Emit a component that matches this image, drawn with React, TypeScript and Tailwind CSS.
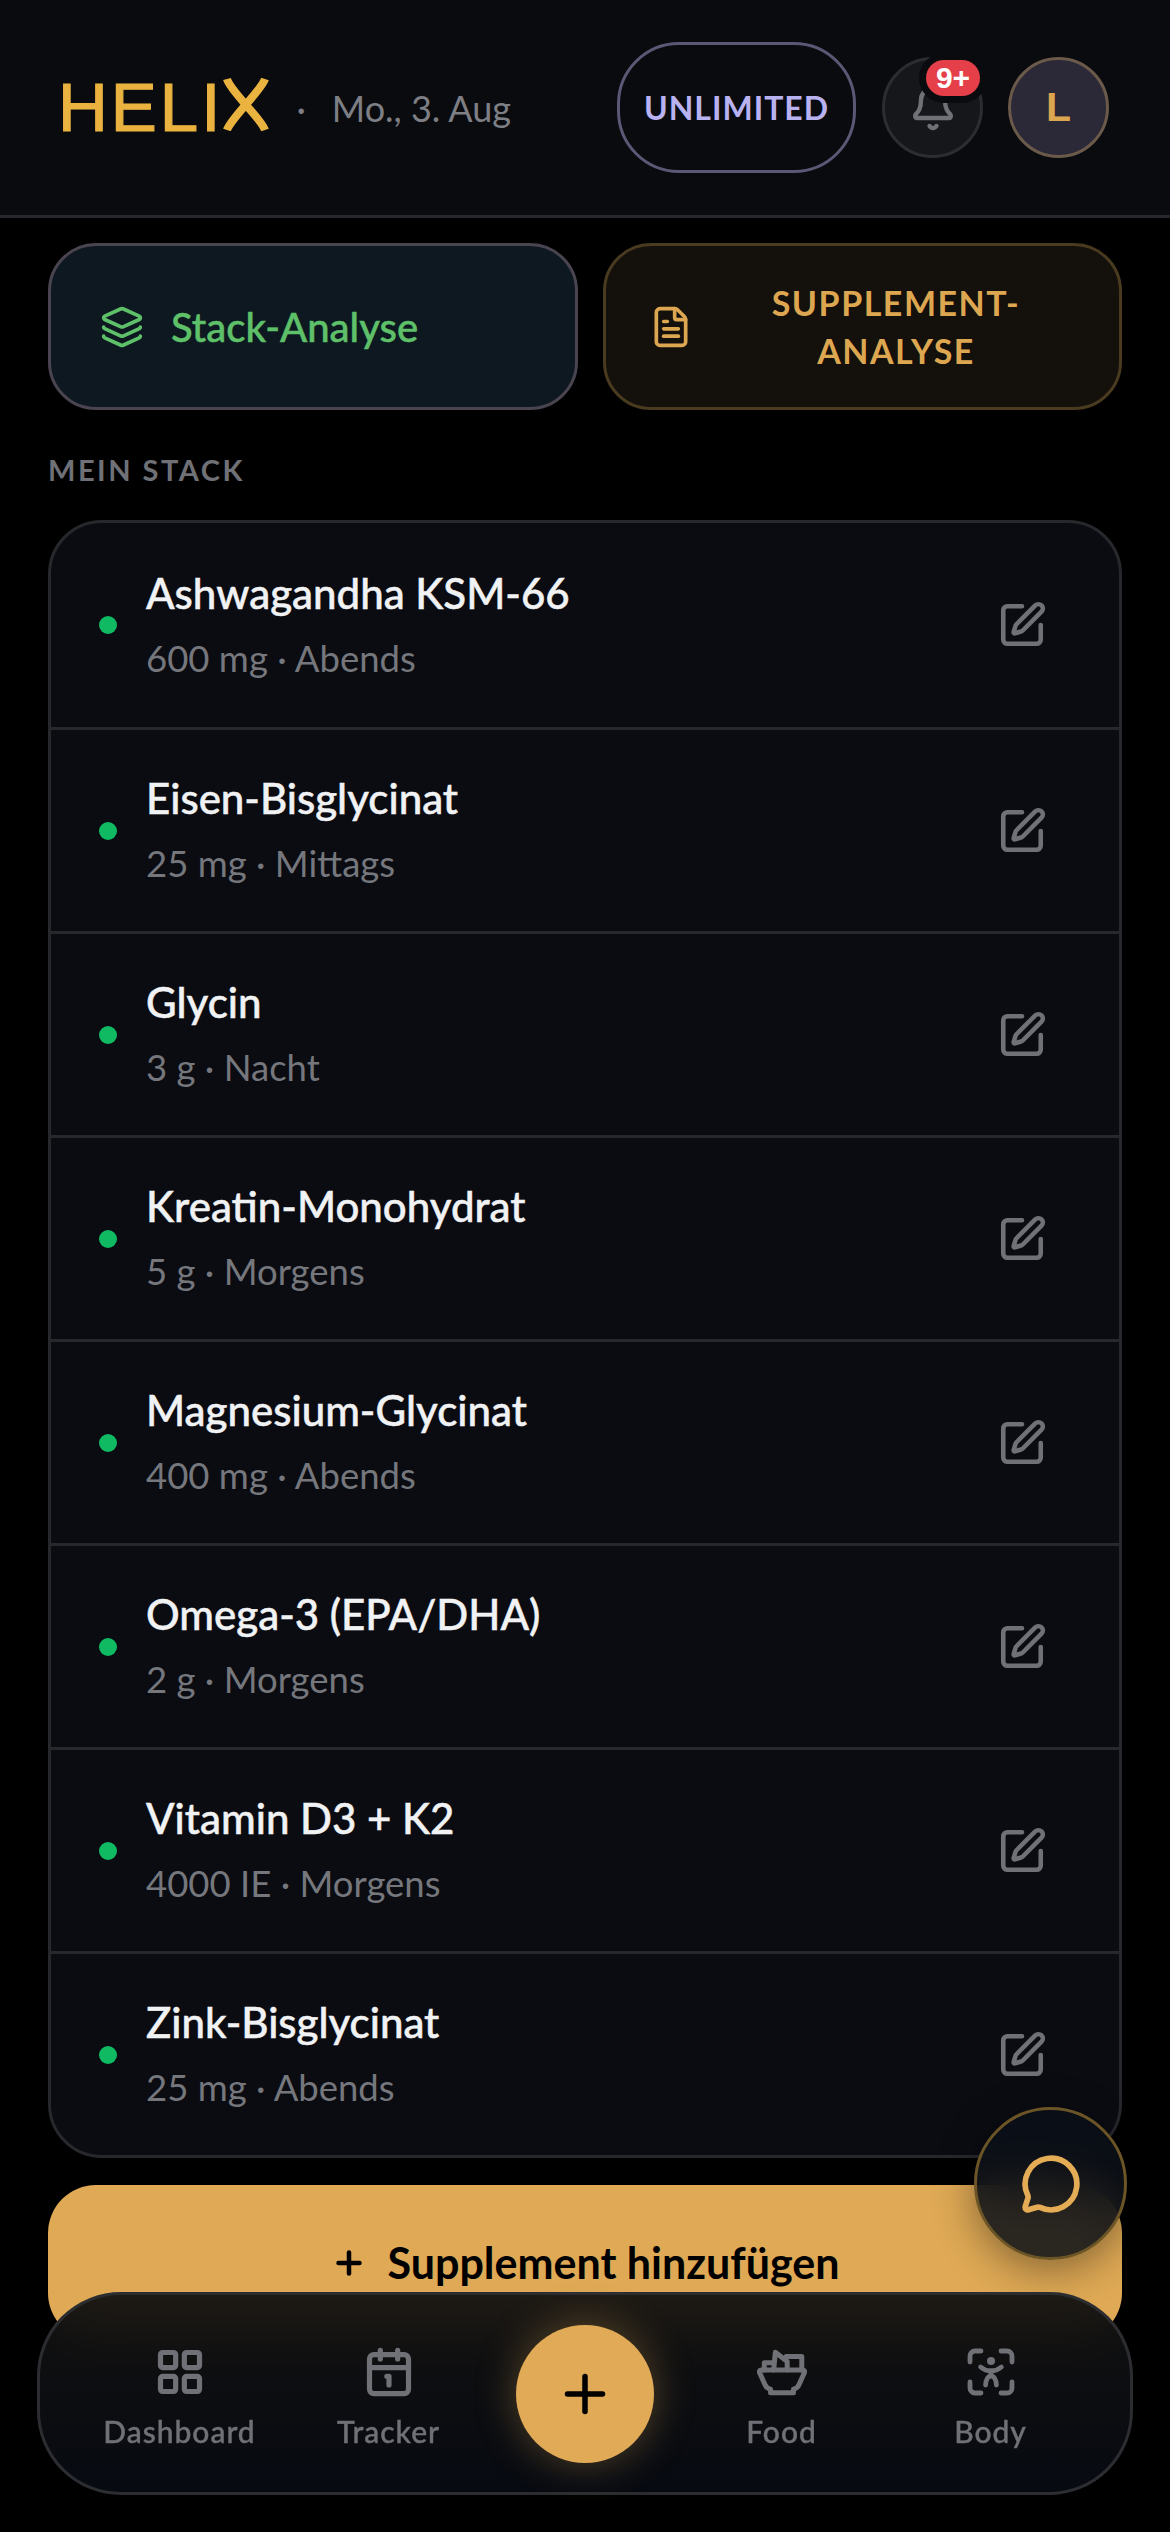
import { Bell, Calendar1, FileText, Layers, LayoutGrid, MessageCircle, Plus, SquarePen } from "lucide-react";

const supplements = [
  { name: "Ashwagandha KSM-66", detail: "600 mg · Abends" },
  { name: "Eisen-Bisglycinat", detail: "25 mg · Mittags" },
  { name: "Glycin", detail: "3 g · Nacht" },
  { name: "Kreatin-Monohydrat", detail: "5 g · Morgens" },
  { name: "Magnesium-Glycinat", detail: "400 mg · Abends" },
  { name: "Omega-3 (EPA/DHA)", detail: "2 g · Morgens" },
  { name: "Vitamin D3 + K2", detail: "4000 IE · Morgens" },
  { name: "Zink-Bisglycinat", detail: "25 mg · Abends" },
];

const BowlIcon = () => (
  <svg width="50" height="50" viewBox="0 0 24 24" fill="none" stroke="currentColor" strokeWidth="2.4" strokeLinecap="round" strokeLinejoin="round">
    <path d="M2 11h20c.6 0 1 .5.8 1.200L20.200 18c-.5 1.200-1.500 2-2.700 2.300V22h-11v-1.700C5.300 20 4.300 19.200 3.800 18L1.200 12.200C1 11.500 1.400 11 2 11z" />
    <path d="M8 11l.8-8.500L14.500 7v4" />
    <path d="M14 4.500h7.500V11" />
    <path d="M3.500 11V7.500H8" />
  </svg>
);

const BodyIcon = () => (
  <svg width="48" height="48" viewBox="0 0 24 24" fill="none" stroke="currentColor" strokeWidth="2.400" strokeLinecap="round" strokeLinejoin="round">
    <path d="M1.500 7V4a2.500 2.500 0 0 1 2.500-2.500h3" />
    <path d="M17 1.500h3A2.500 2.500 0 0 1 22.500 4v3" />
    <path d="M22.500 17v3a2.500 2.500 0 0 1-2.500 2.500h-3" />
    <path d="M7 22.500H4A2.500 2.500 0 0 1 1.500 20v-3" />
    <circle cx="12" cy="6.500" r="2" fill="currentColor" stroke="none" />
    <path d="M6.800 9.500c1.800 1.500 3.200 2 5.200 2s3.400-.5 5.200-2" />
    <path d="M12 11.500v2.500M9.300 18.500c0-2.500 1.200-4.500 2.700-4.500s2.700 2 2.700 4.500" />
  </svg>
);

const NavItem = ({ label, icon }: { label: string; icon: React.ReactNode }) => (
  <div className="w-[209px] pt-[8px] flex flex-col items-center text-[#6f7177]">
    <div className="h-[50px] flex items-center justify-center">{icon}</div>
    <span className="mt-[16px] text-[30px] leading-[36px] font-medium tracking-[1px] [-webkit-text-stroke:0.4px_#6f7177]">{label}</span>
  </div>
);

export default function App() {
  return (
    <div className="relative h-[2532px] w-[1170px] overflow-hidden bg-black font-['Lato',sans-serif]">
      <header className="h-[218px] bg-[#0a0b0f] border-b-[3px] border-[#26282c] flex items-center justify-between pl-[58px] pr-[61px]">
        <div className="flex items-center">
          <span className="text-[69px] leading-none tracking-[3px] text-[#eab23f] [-webkit-text-stroke:1.2px_#eab23f] font-['Liberation_Sans',sans-serif]">
            HELI
            <span className="relative text-transparent [-webkit-text-stroke:0]">
              X
              <svg className="absolute left-0 top-[9px]" width="46" height="53" viewBox="0 0 46 53" fill="none" stroke="#eab23f" strokeWidth="8">
                <path d="M4 1c3 12 34 39 38 51" />
                <path d="M42 1C38 13 8 40 4 52" />
              </svg>
            </span>
          </span>
          <span className="ml-[24px] text-[36px] text-[#7d7f85]">·</span>
          <span className="ml-[26px] text-[36px] leading-none text-[#7d7f85]">Mo., 3. Aug</span>
        </div>
        <div className="flex items-center">
          <div className="w-[239px] h-[131px] rounded-[62px] border-[3px] border-[#5a5875] flex items-center justify-center text-[32px] font-bold tracking-[1px] text-[#b9b2f0]">
            UNLIMITED
          </div>
          <div className="relative ml-[26px] w-[101px] h-[101px] rounded-full bg-[#15171b] border-[3px] border-[#2b2d31] flex items-center justify-center text-[#6f7177]">
            <Bell size={48} strokeWidth={2.2} />
            <span className="absolute left-[41px] top-0 h-[36px] w-[54px] rounded-full bg-[#e5404a] text-white text-[30px] font-bold font-['Liberation_Sans',sans-serif] leading-[36px] text-center shadow-[0_0_0_7px_#0a0b0f]">
              9+
            </span>
          </div>
          <div className="ml-[25px] w-[101px] h-[101px] rounded-full bg-[#2b2838] border-[3px] border-[#6b5a4a] flex items-center justify-center text-[41px] font-bold text-[#dca54f] font-['Liberation_Sans',sans-serif]">
            L
          </div>
        </div>
      </header>

      <main className="px-[48px]">
        <div className="mt-[25px] flex gap-[25px]">
          <button className="w-[530px] h-[167px] rounded-[48px] bg-[#0d1820] border-[3px] border-[#4a4450] flex items-center pl-[49px] text-[#5fc06a]">
            <Layers size={44} strokeWidth={2} />
            <span className="ml-[27px] text-[40px] font-medium [-webkit-text-stroke:0.5px_#5fc06a]">Stack-Analyse</span>
          </button>
          <button className="w-[519px] h-[167px] rounded-[48px] bg-[#14100b] border-[3px] border-[#4a3a20] flex items-center pl-[43px] text-[#dda650]">
            <FileText size={44} strokeWidth={2} />
            <span className="flex-1 pr-[20px] text-center text-[34px] leading-[48px] font-bold tracking-[1.5px]">
              SUPPLEMENT-
              <br />
              ANALYSE
            </span>
          </button>
        </div>

        <h2 className="mt-[42px] text-[29px] leading-[36px] font-bold tracking-[2.5px] text-[#6f7177]">MEIN STACK</h2>

        <div className="mt-[32px] rounded-[54px] border-[3px] border-[#26282c] bg-[#0a0c12] overflow-hidden">
          {supplements.map((s, i) => (
            <div key={s.name} className={`h-[204px] flex items-center pl-[48px] pr-[72px] ${i > 0 ? "border-t-[3px] border-[#26282c]" : ""}`}>
              <span className="w-[18px] h-[18px] rounded-full bg-[#0fba63]" />
              <div className="ml-[29px] flex-1">
                <div className="text-[42px] leading-[52px] font-medium text-[#f1f2f4] [-webkit-text-stroke:0.5px_#f1f2f4]">{s.name}</div>
                <div className="mt-[13px] text-[36.500px] leading-[52px] text-[#75777d]">{s.detail}</div>
              </div>
              <SquarePen size={50} strokeWidth={2.2} className="text-[#6f7177]" />
            </div>
          ))}
        </div>

        <button className="mt-[27px] w-full h-[156px] rounded-[48px] bg-[#dfa955] flex items-center justify-center text-black">
          <Plus size={36} strokeWidth={3} />
          <span className="ml-[21px] text-[43px] font-bold">Supplement hinzufügen</span>
        </button>
      </main>

      <button className="absolute left-[974px] top-[2107px] w-[153px] h-[153px] rounded-full bg-[#0a0f18]/85 backdrop-blur-xl border-[3px] border-[#6b5426] flex items-center justify-center text-[#e3ac55] shadow-[0_10px_40px_rgba(0,0,0,0.4)]">
        <MessageCircle size={62} strokeWidth={2.2} />
      </button>

      <nav className="absolute left-[37px] top-[2292px] w-[1096px] h-[203px] rounded-[84px] bg-gradient-to-b from-[#131211]/95 to-[#070a11] backdrop-blur-xl border-[3px] border-[#2b2d31] flex items-center justify-center">
        <NavItem label="Dashboard" icon={<LayoutGrid size={52} strokeWidth={2.400} />} />
        <NavItem label="Tracker" icon={<Calendar1 size={52} strokeWidth={2.400} />} />
        <button className="mx-[23px] w-[138px] h-[138px] rounded-full bg-[#e0aa57] flex items-center justify-center text-black shadow-[0_0_40px_rgba(224,170,87,0.35)]">
          <Plus size={60} strokeWidth={2.2} />
        </button>
        <NavItem label="Food" icon={<BowlIcon />} />
        <NavItem label="Body" icon={<BodyIcon />} />
      </nav>
    </div>
  );
}
